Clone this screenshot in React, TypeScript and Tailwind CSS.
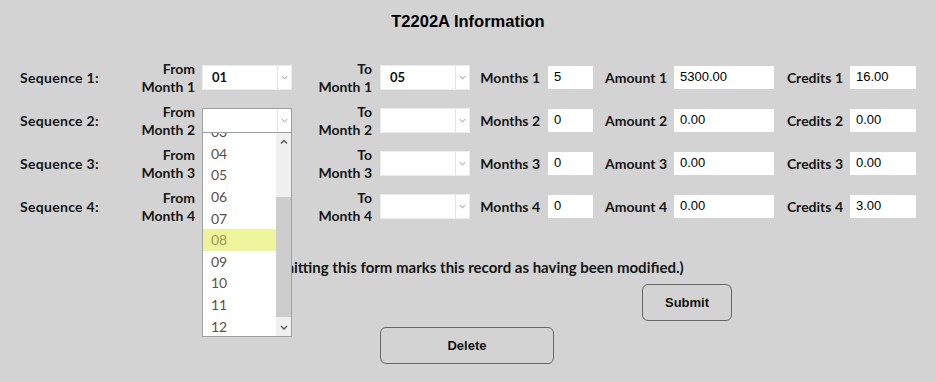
import React from 'react';

const sequences = [
  { n: 1, from: '01', to: '05', months: '5', amount: '5300.00', credits: '16.00' },
  { n: 2, from: '', to: '', months: '0', amount: '0.00', credits: '0.00' },
  { n: 3, from: '', to: '', months: '0', amount: '0.00', credits: '0.00' },
  { n: 4, from: '', to: '', months: '0', amount: '0.00', credits: '3.00' },
];

const options = ['03', '04', '05', '06', '07', '08', '09', '10', '11', '12'];

const Chevron = ({ up = false, className = '' }: { up?: boolean; className?: string }) => (
  <svg width="8" height="5" viewBox="0 0 8 5" className={className}>
    <path
      d={up ? 'M1 4.5 L4 1.5 L7 4.5' : 'M1 1 L4 4 L7 1'}
      fill="none"
      stroke="currentColor"
      strokeWidth="1.3"
    />
  </svg>
);

const MonthSelect = ({ value, open = false }: { value: string; open?: boolean }) => (
  <div className="relative w-[90px] h-[25px]">
    <div
      className={`flex h-full w-full bg-white border ${open ? 'border-[#a0a0a0]' : 'border-[#ececec]'}`}
    >
      <div className="flex-1 flex items-center pl-[9px] text-[13px] font-bold text-[#111]">{value}</div>
      <div className="w-[14px] flex items-center justify-center border-l border-[#e4e4e4] text-[#b5b5b5]">
        <Chevron className="w-[7px]" />
      </div>
    </div>
    {open && (
      <div className="absolute left-0 top-[24px] z-10 w-[90px] h-[205px] bg-white border border-[#a0a0a0] flex overflow-hidden">
        <div className="flex-1 overflow-hidden">
          <div className="-mt-[12px]">
            {options.map((o) => (
              <div
                key={o}
                className={`h-[21.6px] flex items-center pl-[8px] text-[14px] font-normal ${
                  o === '08' ? 'bg-[#eef49c] text-[#9c9c52]' : 'text-[#5a5048]'
                }`}
              >
                {o}
              </div>
            ))}
          </div>
        </div>
        <div className="w-[15px] bg-[#f0f0f0] flex flex-col">
          <div className="h-[17px] flex items-center justify-center text-[#555]">
            <Chevron up />
          </div>
          <div className="h-[47px]" />
          <div className="h-[120px] bg-[#cdcdcd]" />
          <div className="flex-1 flex items-end justify-center pb-[6px] text-[#555]">
            <Chevron />
          </div>
        </div>
      </div>
    )}
  </div>
);

const TextBox = ({ value, width }: { value: string; width: string }) => (
  <div
    className={`${width} h-[23px] bg-white flex items-center pl-[6px] pb-[2px] text-[13px] font-normal text-black`}
    style={{ fontFamily: '"Liberation Sans", Arial, sans-serif' }}
  >
    {value}
  </div>
);

export default function App() {
  return (
    <div
      className="w-[936px] h-[382px] bg-[#d3d3d3] text-[#151515] overflow-hidden"
      style={{ fontFamily: 'Lato, "Open Sans", sans-serif' }}
    >
      <div
        className="h-[42px] flex items-center justify-center text-[16.5px] font-bold text-black"
        style={{ fontFamily: '"Liberation Sans", Arial, sans-serif' }}
      >
        T2202A Information
      </div>

      <div className="mt-[14px] pl-[20px]">
        {sequences.map((s) => (
          <div key={s.n} className="h-[43px] flex items-center font-bold text-[14px]">
            <div className="w-[110px] tracking-[0.3px]">Sequence {s.n}:</div>
            <div className="w-[65px] text-right leading-[18px]">
              From
              <br />
              Month {s.n}
            </div>
            <div className="ml-[7px]">
              <MonthSelect value={s.from} open={s.n === 2} />
            </div>
            <div className="w-[80px] text-right leading-[18px]">
              To
              <br />
              Month {s.n}
            </div>
            <div className="ml-[8px]">
              <MonthSelect value={s.to} />
            </div>
            <div className="w-[78px] pr-[8px] text-right">Months {s.n}</div>
            <TextBox value={s.months} width="w-[45px]" />
            <div className="w-[81px] pr-[7px] text-right">Amount {s.n}</div>
            <TextBox value={s.amount} width="w-[100px]" />
            <div className="w-[76px] pr-[7px] text-right">Credits {s.n}</div>
            <TextBox value={s.credits} width="w-[66px]" />
          </div>
        ))}
      </div>

      <div className="mt-[30px] h-[18px] leading-[18px] text-center text-[15px] font-bold">
        (Submitting this form marks this record as having been modified.)
      </div>

      <div className="mt-[8px] flex justify-end pr-[204px]">
        <button
          className="w-[90px] h-[37px] rounded-[6px] border border-[#666] bg-transparent text-[13px] font-bold text-[#111]"
          style={{ fontFamily: '"Liberation Sans", Arial, sans-serif' }}
        >
          Submit
        </button>
      </div>

      <div className="mt-[6px] flex justify-center">
        <button
          className="ml-[-2px] w-[174px] h-[37px] rounded-[6px] border border-[#666] bg-transparent text-[13px] font-bold text-[#111]"
          style={{ fontFamily: '"Liberation Sans", Arial, sans-serif' }}
        >
          Delete
        </button>
      </div>
    </div>
  );
}
